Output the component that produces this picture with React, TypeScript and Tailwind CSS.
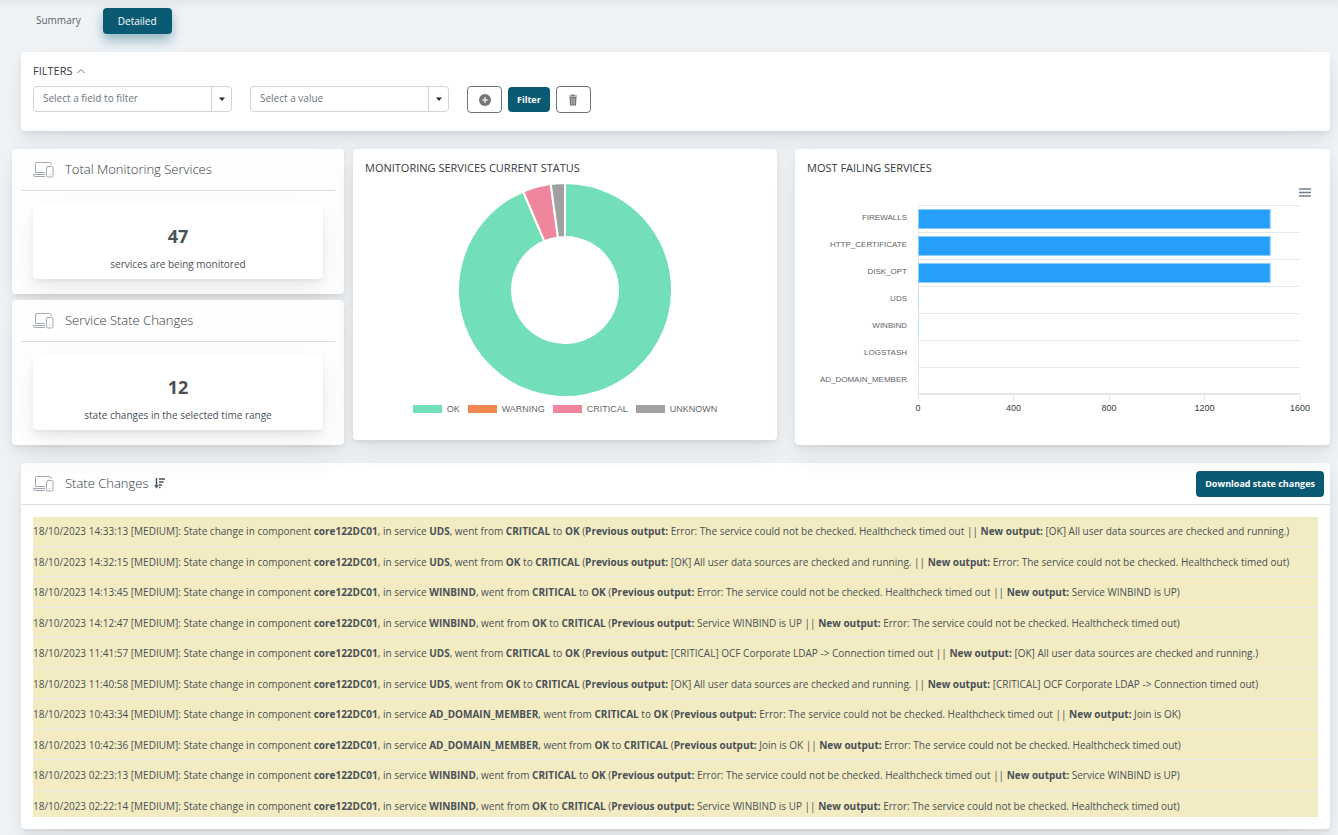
import type { ReactNode } from "react";

const cardShadow =
  "shadow-[0_8px_35px_rgba(4,9,20,0.03),0_15px_22px_rgba(4,9,20,0.03),0_4px_8px_rgba(4,9,20,0.05),0_2px_3px_rgba(4,9,20,0.03)]";

const TIMEOUT =
  "Error: The service could not be checked. Healthcheck timed out";
const ALL_OK = "[OK] All user data sources are checked and running.";
const LDAP = "[CRITICAL] OCF Corporate LDAP -> Connection timed out";

const changes = [
  { at: "18/10/2023 14:33:13", service: "UDS", from: "CRITICAL", to: "OK", prev: TIMEOUT, next: ALL_OK },
  { at: "18/10/2023 14:32:15", service: "UDS", from: "OK", to: "CRITICAL", prev: ALL_OK, next: TIMEOUT },
  { at: "18/10/2023 14:13:45", service: "WINBIND", from: "CRITICAL", to: "OK", prev: TIMEOUT, next: "Service WINBIND is UP" },
  { at: "18/10/2023 14:12:47", service: "WINBIND", from: "OK", to: "CRITICAL", prev: "Service WINBIND is UP", next: TIMEOUT },
  { at: "18/10/2023 11:41:57", service: "UDS", from: "CRITICAL", to: "OK", prev: LDAP, next: ALL_OK },
  { at: "18/10/2023 11:40:58", service: "UDS", from: "OK", to: "CRITICAL", prev: ALL_OK, next: LDAP },
  { at: "18/10/2023 10:43:34", service: "AD_DOMAIN_MEMBER", from: "CRITICAL", to: "OK", prev: TIMEOUT, next: "Join is OK" },
  { at: "18/10/2023 10:42:36", service: "AD_DOMAIN_MEMBER", from: "OK", to: "CRITICAL", prev: "Join is OK", next: TIMEOUT },
  { at: "18/10/2023 02:23:13", service: "WINBIND", from: "CRITICAL", to: "OK", prev: TIMEOUT, next: "Service WINBIND is UP" },
  { at: "18/10/2023 02:22:14", service: "WINBIND", from: "OK", to: "CRITICAL", prev: "Service WINBIND is UP", next: TIMEOUT },
];

const statuses = [
  { label: "OK", count: 44, color: "#72dfb9" },
  { label: "WARNING", count: 0, color: "#f0884f" },
  { label: "CRITICAL", count: 2, color: "#f0869d" },
  { label: "UNKNOWN", count: 1, color: "#a0a0a0" },
];

const failing = [
  { name: "FIREWALLS", value: 1473 },
  { name: "HTTP_CERTIFICATE", value: 1473 },
  { name: "DISK_OPT", value: 1473 },
  { name: "UDS", value: 2 },
  { name: "WINBIND", value: 2 },
  { name: "LOGSTASH", value: 1 },
  { name: "AD_DOMAIN_MEMBER", value: 1 },
];

function DevicesIcon() {
  return (
    <svg width="21" height="16" viewBox="0 0 21 16" fill="none" stroke="#a3a9b0" aria-hidden="true">
      <path d="M2.5 10.5V2Q2.5.5 4 .5h12.5Q18 .5 18 2v1" />
      <path d="M2.5 10.5H12M.5 12.5H12M.5 12.5v1q0 1 1 1H12" />
      <rect x="13.5" y="4.5" width="6.5" height="10.5" rx="1.5" />
      <path d="M16.3 12.5h1" />
    </svg>
  );
}

function SortIcon() {
  return (
    <svg width="12" height="12" viewBox="0 0 12 12" fill="none" stroke="#495057" aria-hidden="true">
      <path d="M2.5 0v9" strokeWidth="1.5" />
      <path d="M.5 7l2 2.5 2-2.5" strokeWidth="1.2" />
      <path d="M5 1h6M5 4h4.500M5 7h3M5 9.500h1.500" strokeWidth="1.5" />
    </svg>
  );
}

function Combo({ id, label }: { id: string; label: string }) {
  return (
    <div className="relative w-[199px]">
      <select
        id={id}
        aria-label={label}
        className="block h-[26px] w-full appearance-none rounded-sm border border-[#ced4da] bg-white px-[9px] pb-0.5 text-[10px] text-[#6c757d]"
      >
        <option>{label}</option>
      </select>
      <span className="pointer-events-none absolute inset-y-0 right-0 flex w-[21px] items-center justify-center border-l border-[#ced4da]">
        <svg width="6" height="4" viewBox="0 0 6 4" aria-hidden="true">
          <path d="M0 .5h6L3 4z" fill="#212529" />
        </svg>
      </span>
    </div>
  );
}

function StatCard({ title, value, text }: { title: string; value: number; text: string }) {
  return (
    <section className={`rounded-sm bg-[#fefefe] px-[9px] pb-[15px] ${cardShadow}`}>
      <div className="flex h-[42px] items-center gap-[11px] border-b border-[#dcdfe2] pl-3">
        <DevicesIcon />
        <h2 className="text-[13px] font-light text-[#343a40]">{title}</h2>
      </div>
      <div className={`mx-3 mt-3 rounded-sm bg-white pt-[19px] pb-[6px] text-center ${cardShadow}`}>
        <div className="text-[18px] leading-7 font-bold text-[#495057]">{value}</div>
        <div className="mt-[5px] text-[10px] leading-[18px] text-[#495057]">{text}</div>
      </div>
    </section>
  );
}

function slicePath(start: number, end: number) {
  const point = (r: number, t: number) => {
    const a = t * 2 * Math.PI;
    return `${107 + r * Math.sin(a)} ${107 - r * Math.cos(a)}`;
  };
  const large = end - start > 0.5 ? 1 : 0;
  return `M${point(107, start)}A107 107 0 ${large} 1 ${point(107, end)}L${point(53, end)}A53 53 0 ${large} 0 ${point(53, start)}Z`;
}

function Donut() {
  const total = statuses.reduce((sum, s) => sum + s.count, 0);
  let seen = 0;
  return (
    <svg width="214" height="214" viewBox="0 0 214 214" role="img" aria-label="Current status">
      {statuses.map((s) => {
        const start = seen / total;
        seen += s.count;
        return s.count > 0 ? (
          <path key={s.label} d={slicePath(start, seen / total)} fill={s.color} stroke="#fff" strokeWidth="2" />
        ) : null;
      })}
    </svg>
  );
}

function FailingChart() {
  return (
    <svg viewBox="0 0 535 216" className="block w-full font-['Liberation_Sans',sans-serif]">
      <g stroke="#e6e6e6">
        {failing.map((f, i) => (
          <path key={f.name} d={`M123 ${5.5 + i * 27}H505`} />
        ))}
        <path d="M123.5 5v194" />
        <path d="M123 194H505" strokeWidth="2" />
        {[218.5, 314.5, 409.5, 505.5].map((x) => (
          <path key={x} d={`M${x} 195v5`} />
        ))}
      </g>
      {failing.map((f, i) => (
        <g key={f.name}>
          <text x="112" y={20 + i * 27} textAnchor="end" fontSize="8" fill="#5f6368">
            {f.name}
          </text>
          {f.value > 100 ? (
            <rect
              x="123.5"
              y={9.5 + i * 27}
              width={(f.value / 1600) * 382}
              height="19"
              fill="#269ffb"
              stroke="#8ccffd"
            />
          ) : (
            <rect x="123" y={9 + i * 27} width="1" height="19" fill={f.value > 1 ? "#b5dcf9" : "#dcebf7"} />
          )}
        </g>
      ))}
      {[0, 400, 800, 1200, 1600].map((v) => (
        <text key={v} x={123 + (v / 1600) * 382} y="211" textAnchor="middle" fontSize="9" fill="#373d3f">
          {v}
        </text>
      ))}
    </svg>
  );
}

function ChartCard({ title, children }: { title: string; children: ReactNode }) {
  return (
    <section className={`rounded-sm bg-white pt-[11px] ${cardShadow}`}>
      <h2 className="px-3 text-[11px] leading-4 font-medium text-[#343a40]">{title}</h2>
      {children}
    </section>
  );
}

export default function App() {
  return (
    <div className="min-h-screen bg-[#eff3f6] font-['Open_Sans',sans-serif] text-[10px] text-[#495057]">
      <header className="h-0 shadow-[0_0_8px_2px_rgba(4,9,20,0.12)]" />
      <main className="pr-2 pb-[6px] pl-3">
        <nav className="flex pt-2 pl-[9px]">
          <a href="#summary" className="px-[15px] leading-[25px] text-[#5b5f64]">
            Summary
          </a>
          <a
            href="#detailed"
            className="ml-[7px] rounded-sm bg-[#0b5a73] px-[15px] leading-[26px] font-medium text-white shadow-[0_6px_12px_rgba(11,90,115,0.4)]"
          >
            Detailed
          </a>
        </nav>

        {/* Filters */}
        <section className={`mt-[18px] ml-[9px] rounded-sm bg-white px-3 pt-[11px] pb-[18px] ${cardShadow}`}>
          <h2 className="flex items-center gap-1 text-[11px] leading-4 font-medium text-[#343a40]">
            FILTERS
            <svg width="10" height="6" viewBox="0 0 10 6" fill="none" stroke="#6c757d" aria-hidden="true">
              <path d="M1.5 5L5 1.500 8.500 5" />
            </svg>
          </h2>
          <div className="mt-[7px] flex items-start gap-[18px]">
            <Combo id="field" label="Select a field to filter" />
            <Combo id="value" label="Select a value" />
            <div className="flex items-center gap-1.5">
              <button aria-label="Add filter" className="flex h-[27px] w-[35px] items-center justify-center rounded-sm border border-[#6c757d]">
                <svg width="12" height="12" viewBox="0 0 12 12" aria-hidden="true">
                  <circle cx="6" cy="6" r="6" fill="#757575" />
                  <path d="M6 3v6M3 6h6" stroke="#fff" strokeWidth="1.2" />
                </svg>
              </button>
              <button className="h-[25px] rounded-sm bg-[#0b5a73] px-[9px] text-[9px] font-bold text-white">Filter</button>
              <button aria-label="Clear filters" className="flex h-[27px] w-[35px] items-center justify-center rounded-sm border border-[#6c757d]">
                <svg width="8" height="12" viewBox="0 0 8 12" aria-hidden="true">
                  <path d="M0 1.5h2.5V.5h3v1H8v1H0zM.5 3h7l-.5 8.5H1z" fill="#757575" />
                  <path d="M2.5 4v6.5M4 4v6.5M5.5 4v6.5" stroke="#d0d0d0" strokeWidth=".6" />
                </svg>
              </button>
            </div>
          </div>
        </section>

        {/* Overview */}
        <div className="mt-[18px] grid grid-cols-[332fr_451fr_535fr] items-start">
          <div className="flex flex-col gap-1.5">
            <StatCard title="Total Monitoring Services" value={47} text="services are being monitored" />
            <StatCard title="Service State Changes" value={12} text="state changes in the selected time range" />
          </div>
          <div className="pr-[18px] pl-[9px]">
            <ChartCard title="MONITORING SERVICES CURRENT STATUS">
              <div className="mt-[7px] flex flex-col items-center pb-[25px]">
                <Donut />
                <ul className="mt-1.5 flex gap-2 font-['Liberation_Sans',sans-serif] text-[9px] leading-3 text-[#666]">
                  {statuses.map((s) => (
                    <li key={s.label} className="flex items-center gap-[5px]">
                      <span className="h-2 w-[29px]" style={{ backgroundColor: s.color }} />
                      {s.label}
                    </li>
                  ))}
                </ul>
              </div>
            </ChartCard>
          </div>
          <ChartCard title="MOST FAILING SERVICES">
            <div className="flex h-6 items-end justify-end pr-[19px] pb-[3px]">
              <button aria-label="Chart menu">
                <svg width="12" height="9" viewBox="0 0 12 9" className="block" aria-hidden="true">
                  <path d="M0 1h12M0 4.5h12M0 8h12" stroke="#6e8192" strokeWidth="1.3" />
                </svg>
              </button>
            </div>
            <div className="pb-[29px]">
              <FailingChart />
            </div>
          </ChartCard>
        </div>

        {/* State changes */}
        <section className={`mt-[18px] ml-[9px] rounded-sm bg-white ${cardShadow}`}>
          <div className="flex h-[42px] items-center border-b border-[#dcdfe2] pr-1.5 pl-3">
            <DevicesIcon />
            <h2 className="mr-1.5 ml-[11px] text-[13px] font-light text-[#343a40]">State Changes</h2>
            <SortIcon />
            <button className="ml-auto h-[26px] rounded-sm bg-[#0b5a73] px-[9px] text-[9px] font-bold text-white">
              Download state changes
            </button>
          </div>
          <div className="p-3">
            <ul className="flex min-h-[300px] flex-col justify-between bg-[#f3ecc2] pt-1.5 pb-[3px]">
              {changes.map((c, i) => [
                i > 0 && <li key={`${c.at}-rule`} role="separator" className="h-px bg-[#e9ecef]" />,
                <li key={c.at} className="leading-4">
                  {c.at} [MEDIUM]: State change in component <b>core122DC01</b>, in service <b>{c.service}</b>, went
                  from <b>{c.from}</b> to <b>{c.to}</b> (<b>Previous output:</b> {c.prev} || <b>New output:</b> {c.next})
                </li>,
              ])}
            </ul>
          </div>
        </section>
      </main>
    </div>
  );
}
